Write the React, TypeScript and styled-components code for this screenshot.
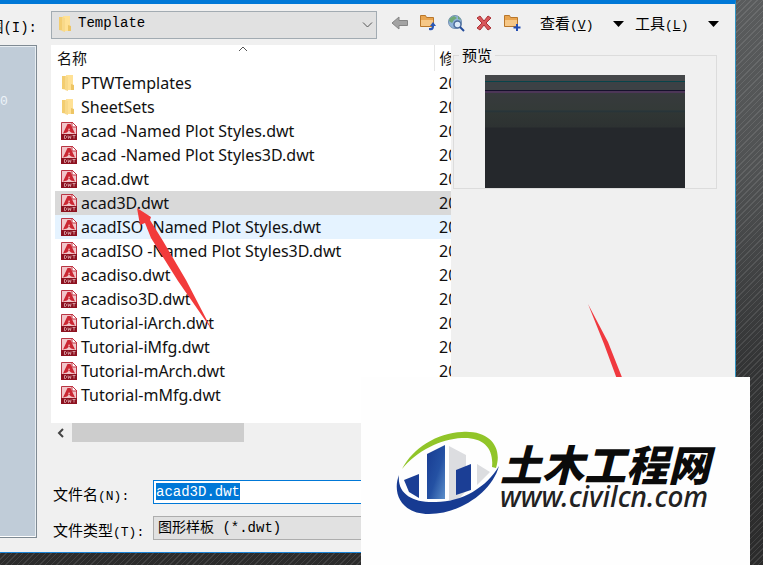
import React from 'react';
import styled, { createGlobalStyle } from 'styled-components';

const GlobalStyle = createGlobalStyle`
  * { box-sizing: border-box; }
  body { margin: 0; overflow: hidden; }
  button, input, select { font: inherit; color: inherit; border-radius: 0; }
`;

const mono = `"Liberation Mono", "Noto Sans CJK SC", monospace`;
const sans = `"Noto Sans", "Noto Sans CJK SC", sans-serif`;

const Desktop = styled.div`
  position: relative;
  overflow: hidden;
  min-height: 100vh;
  padding: 0 27px 12px 0;
  background:
    repeating-linear-gradient(135deg, transparent 0 3px, rgba(255, 255, 255, 0.1) 3px 4px),
    linear-gradient(#5a5c5d, #505253 30%, #333435 65%, #2b2b2b);
`;

const Dialog = styled.main`
  border-top: 4px solid #0078d7;
  border-right: 1px solid #3296c4;
  border-bottom: 1px solid #1883d7;
  background: #f0f0f0;
  color: #000;
  font: 15px/20px "Noto Sans CJK SC", sans-serif;
`;

const Header = styled.header`
  display: flex;
  align-items: center;
  height: 41px;
`;

const LookInLabel = styled.label`
  display: flex;
  justify-content: flex-end;
  flex: none;
  width: 51px;
  height: 24px;
  padding: 3px 14px 0 0;
  overflow: hidden;
  white-space: nowrap;
`;

const Latin = styled.span<{ $size?: number }>`
  font-family: ${mono};
  font-size: ${p => p.$size ?? 13}px;
`;

const Combo = styled.div`
  position: relative;
  flex: 1;
  min-width: 0;
  height: 28px;
  svg { position: absolute; pointer-events: none; }
  svg:first-of-type { left: 6px; top: 4px; }
  svg:last-of-type { right: 4px; top: 10px; }
`;

const FolderSelect = styled.select`
  appearance: none;
  width: 100%;
  height: 28px;
  padding: 0 24px 4px 26px;
  border: 1px solid #a2abb2;
  background: #e1e1e1;
  font: 14px/20px ${mono};
`;

const Toolbar = styled.div`
  display: flex;
  align-items: center;
  width: 358px;
  padding: 0 16px 3px 9px;
`;

const ToolButton = styled.button`
  width: 28px;
  height: 24px;
  padding: 0;
  border: 0;
  background: none;
  svg { display: block; margin: auto; }
`;

const MenuButton = styled.button<{ $first?: boolean }>`
  display: flex;
  align-items: center;
  justify-content: space-between;
  width: 84px;
  margin-left: ${p => (p.$first ? 14 : 11)}px;
  padding: 2px 0 0;
  border: 0;
  background: none;
  white-space: nowrap;
`;

const Body = styled.div`
  display: grid;
  grid-template-columns: 37px minmax(0, 1fr);
  column-gap: 14px;
`;

const Places = styled.nav`
  margin-bottom: 14px;
  border: solid #7f8a93;
  border-width: 1px 1px 1px 0;
  background: #c0ccd8;
  box-shadow: inset -1px 1px #e8eef3, inset 0 -1px #fff;
  padding-top: 43px;
  a { color: #edf3f8; font: 13px/20px ${mono}; text-decoration: none; }
`;

const Panes = styled.div`
  display: grid;
  grid-template-columns: minmax(0, 1fr) 284px;
`;

const FileList = styled.div`
  position: relative;
  height: 378px;
  padding-left: 4px;
  overflow: hidden;
  background: #fff;
`;

const SortMark = styled.svg`
  position: absolute;
  left: 187px;
  top: 1px;
`;

const FileTable = styled.table`
  width: 100%;
  table-layout: fixed;
  border-collapse: collapse;
  font: 16px/24px ${sans};
  color: #111;
  th, td { height: 24px; padding: 0; white-space: nowrap; overflow: hidden; text-align: left; font-weight: 400; }
  th { height: 26px; padding: 0 0 0 2px; font-size: 15px; }
  th + th { width: 17px; padding-left: 5px; border-left: 1px solid #e5e5e5; }
  td + td { padding-left: 5px; }
`;

const FileRow = styled.tr<{ $state?: 'selected' | 'hover' }>`
  background: ${p => (p.$state === 'selected' ? '#d9d9d9' : p.$state === 'hover' ? '#e5f3ff' : 'none')};
`;

const FileName = styled.div`
  display: flex;
  align-items: center;
  gap: 3px;
  height: 24px;
  padding-left: 5px;
  svg { flex: none; }
`;

const ScrollBar = styled.div`
  display: flex;
  height: 19px;
`;

const ScrollArrow = styled.button`
  display: flex;
  align-items: center;
  justify-content: center;
  width: 21px;
  padding: 0 2px 0 0;
  border: 0;
  background: none;
`;

const ScrollThumb = styled.div`
  width: 172px;
  background: #cdcdcd;
`;

const Preview = styled.fieldset`
  display: flex;
  justify-content: center;
  align-self: start;
  margin: 0 18px 0 2px;
  padding: 10px 0 0;
  border: 1px solid #dcdcdc;
  min-width: 0;
  legend { margin-left: 5px; padding: 0 3px; line-height: 20px; }
`;

const PreviewImage = styled.div`
  width: 200px;
  height: 113px;
  background: linear-gradient(
    #454749 0 6px, #07444b 6px 7px, #3c4145 7px 15px, #15102b 15px 16px, #4d3658 16px 18px,
    #373a3d 18px, #343a38 35px, #25343a 36px, #303634 38px, #2d3232 52px, #25282c 53px);
`;

const Fields = styled.div`
  display: grid;
  grid-template-columns: 100px minmax(0, 1fr);
  grid-auto-rows: 24px;
  row-gap: 12px;
  margin: 38px 100px 12px 2px;
  label { padding-top: 4px; line-height: 20px; white-space: nowrap; }
`;

const NameField = styled.div`
  display: flex;
  height: 24px;
  padding: 2px;
  border: 1px solid #0078d7;
  background: #fff;
`;

const NameInput = styled.input`
  width: 84px;
  height: 17px;
  padding: 0;
  border: 0;
  outline: 0;
  background: #0078d7;
  color: #fff;
  font: 14px/16px ${mono};
`;

const TypeSelect = styled.select`
  appearance: none;
  height: 24px;
  padding: 0 4px 1px;
  border: 1px solid #adadad;
  background: #e1e1e1;
  font: 14px/20px ${mono};
`;

const Arrows = styled.svg`
  position: absolute;
  left: 0;
  top: 0;
  pointer-events: none;
`;

const Brand = styled.aside`
  position: absolute;
  right: 13px;
  bottom: 0;
  display: flex;
  align-items: flex-start;
  width: 389px;
  height: 188px;
  padding: 51px 0 0 34px;
  background: #fefefe;
`;

const BrandText = styled.div`
  padding: 14px 0 0 1px;
  color: #0b0b0b;
  white-space: nowrap;
  strong { display: block; font: italic 900 42px/42px "Noto Sans CJK SC", sans-serif; }
  a { display: block; color: #222; font: italic 500 28px/24px "Noto Sans", sans-serif; text-decoration: none; }
`;

const FolderIcon = () => (
  <svg width="18" height="18" viewBox="0 0 18 18" aria-hidden="true">
    <path d="M2 2h6v14l-6-1z" fill="#f3cd70" />
    <path d="M6 1h7v10l1 1v4H7z" fill="#ffe195" />
    <path d="M5 2l3 1v14l-3-1z" fill="#f8d98a" />
    <path d="M11 10l3 1v5h-3z" fill="#edc565" />
  </svg>
);

const DwtIcon = () => (
  <svg width="18" height="20" viewBox="0 0 18 20" aria-hidden="true">
    <path d="M1.500 1.500h11l4 4v13h-15z" fill="#f2c6ca" stroke="#b93644" />
    <path d="M12 1v5h5z" fill="#fff" stroke="#c23442" />
    <path d="M7.500 3h3l4.500 9.500-4-1-2-2-2 2-4 1z" fill="#cb2733" />
    <path d="M9 7l1 2-2 .5z" fill="#f7c6c9" />
    <path d="M1 13h16v6H1z" fill="#8d1220" />
    <path d="M4.500 14.500v3h1l1-1v-1l-1-1zM8 14.500l.5 3 1-2 1 2 .5-3M12.500 14.500h3M14 14.500v3" fill="none" stroke="#e3b6bb" strokeWidth=".8" />
  </svg>
);

const Triangle = () => (
  <svg width="11" height="6" viewBox="0 0 11 6" aria-hidden="true"><path d="M0 0h11L5.500 6z" /></svg>
);

const OrangeFolder = ({ children }: { children: React.ReactNode }) => (
  <svg width="18" height="18" viewBox="0 0 18 18" aria-hidden="true">
    <path d="M1.500 12.500v-11h5l1 2h7v9z" fill="#e9a550" stroke="#b9772b" />
    <path d="M2 6h12v6H2z" fill="#f6c888" />
    {children}
  </svg>
);

const Emblem = () => (
  <svg width="104" height="90" viewBox="0 0 104 90" aria-hidden="true">
    <defs>
      <linearGradient id="tower" x1="0" y1="0" x2="1" y2="1">
        <stop offset="0" stopColor="#173a91" /><stop offset=".55" stopColor="#2451a3" /><stop offset="1" stopColor="#5c8fca" />
      </linearGradient>
    </defs>
    <path d="M54 18l17 9v36l-8 9h-9zM82 36l13 8-13 13z" fill="#dcdde0" />
    <path d="M32 26l18-9v54H32z" fill="url(#tower)" />
    <path d="M61 42l15-6v26l-15 5z" fill="#1b3e95" />
    <path d="M9 52l15-6v24L14 64z" fill="#1b3e95" />
    <path d="M7 41C18 20 42 5 67 4c27-2 41 15 34 36l-4-1c2-19-9-30-30-29C45 11 22 23 7 41z" fill="#91c529" />
    <path d="M4 47C-3 65 6 86 34 86c31 0 63-22 70-48-12 21-37 36-63 36C18 75 2 66 4 47z" fill="#173b92" />
  </svg>
);

type Entry = { name: string; folder?: boolean; state?: 'selected' | 'hover' };

const entries: Entry[] = [
  { name: 'PTWTemplates', folder: true },
  { name: 'SheetSets', folder: true },
  { name: 'acad -Named Plot Styles.dwt' },
  { name: 'acad -Named Plot Styles3D.dwt' },
  { name: 'acad.dwt' },
  { name: 'acad3D.dwt', state: 'selected' },
  { name: 'acadISO -Named Plot Styles.dwt', state: 'hover' },
  { name: 'acadISO -Named Plot Styles3D.dwt' },
  { name: 'acadiso.dwt' },
  { name: 'acadiso3D.dwt' },
  { name: 'Tutorial-iArch.dwt' },
  { name: 'Tutorial-iMfg.dwt' },
  { name: 'Tutorial-mArch.dwt' },
  { name: 'Tutorial-mMfg.dwt' },
];

export default function App() {
  return (
    <Desktop>
      <GlobalStyle />
      <Dialog>
        <Header>
          <LookInLabel htmlFor="look-in"><span>围<Latin $size={14}>(I):</Latin></span></LookInLabel>
          <Combo>
            <FolderIcon />
            <FolderSelect id="look-in"><option>Template</option></FolderSelect>
            <svg width="11" height="8" viewBox="0 0 11 8" aria-hidden="true"><path d="M1 1.500l4.500 4.500L10 1.500" fill="none" stroke="#555" /></svg>
          </Combo>
          <Toolbar>
            <ToolButton aria-label="Back">
              <svg width="18" height="16" viewBox="0 0 18 16" aria-hidden="true"><path d="M1 8l7-6v3.500h8.500v5H8V14z" fill="#a3a3a3" stroke="#858585" /></svg>
            </ToolButton>
            <ToolButton aria-label="Up one level">
              <OrangeFolder><path d="M10 16c4 1 5-1 5-4h2l-3-4-3 4h2c0 2-1 2-3 2z" fill="#2857b7" /></OrangeFolder>
            </ToolButton>
            <ToolButton aria-label="Search the web">
              <svg width="18" height="18" viewBox="0 0 18 18" aria-hidden="true">
                <circle cx="8" cy="8" r="6.500" fill="#8fb3d8" stroke="#7592b3" />
                <path d="M3 4l4-2 3 2-3 2-2 3-3-2zM11 2l3 4-3-1z" fill="#6fa876" />
                <circle cx="10.500" cy="10.500" r="3.500" fill="#dbeaf8" stroke="#4c6c9c" strokeWidth="1.500" />
                <path d="M13 13l4 4" stroke="#234b9a" strokeWidth="2" />
              </svg>
            </ToolButton>
            <ToolButton aria-label="Delete">
              <svg width="16" height="16" viewBox="0 0 16 16" aria-hidden="true">
                <path d="M1 3l3-2 4 5 4-5 3 2-5 5 5 5-3 2-4-5-4 5-3-2 5-5z" fill="#d8575a" stroke="#aa3236" />
              </svg>
            </ToolButton>
            <ToolButton aria-label="New folder">
              <OrangeFolder><path d="M14 10v7M10.500 13.500h7" stroke="#244eb2" strokeWidth="2" /></OrangeFolder>
            </ToolButton>
            <MenuButton $first><span>查看<Latin>(<u>V</u>)</Latin></span><Triangle /></MenuButton>
            <MenuButton><span>工具<Latin>(<u>L</u>)</Latin></span><Triangle /></MenuButton>
          </Toolbar>
        </Header>
        <Body>
          <Places><a href="#places">0</a></Places>
          <div>
            <Panes>
              <FileList>
                <SortMark width="10" height="6" viewBox="0 0 10 6" aria-hidden="true"><path d="M1 5l4-4 4 4" fill="none" stroke="#555" /></SortMark>
                <FileTable>
                  <thead><tr><th>名称</th><th>修</th></tr></thead>
                  <tbody>
                    {entries.map(e => (
                      <FileRow key={e.name} $state={e.state}>
                        <td><FileName>{e.folder ? <FolderIcon /> : <DwtIcon />}{e.name}</FileName></td>
                        <td>20</td>
                      </FileRow>
                    ))}
                  </tbody>
                </FileTable>
              </FileList>
              <Preview>
                <legend>预览</legend>
                <PreviewImage />
              </Preview>
            </Panes>
            <ScrollBar>
              <ScrollArrow aria-label="Scroll left">
                <svg width="8" height="10" viewBox="0 0 8 10" aria-hidden="true"><path d="M6 1L2 5l4 4" fill="none" stroke="#444" strokeWidth="2" /></svg>
              </ScrollArrow>
              <ScrollThumb />
            </ScrollBar>
            <Fields>
              <label htmlFor="file-name">文件名<Latin>(N):</Latin></label>
              <NameField><NameInput id="file-name" defaultValue="acad3D.dwt" /></NameField>
              <label htmlFor="file-type">文件类型<Latin>(T):</Latin></label>
              <TypeSelect id="file-type"><option>图形样板 (*.dwt)</option></TypeSelect>
            </Fields>
          </div>
        </Body>
      </Dialog>
      <Arrows width="763" height="565" viewBox="0 0 763 565" aria-hidden="true">
        <path d="M137 208L151 217L150 220L163 241L186 280L212 330L178 281L151 238L145 223L140 225z" fill="#f23b3b" />
        <path d="M588 304L608 342L627 390H621L604 344z" fill="#f0393f" />
      </Arrows>
      <Brand>
        <Emblem />
        <BrandText><strong>土木工程网</strong><a href="#civilcn">www.civilcn.com</a></BrandText>
      </Brand>
    </Desktop>
  );
}
